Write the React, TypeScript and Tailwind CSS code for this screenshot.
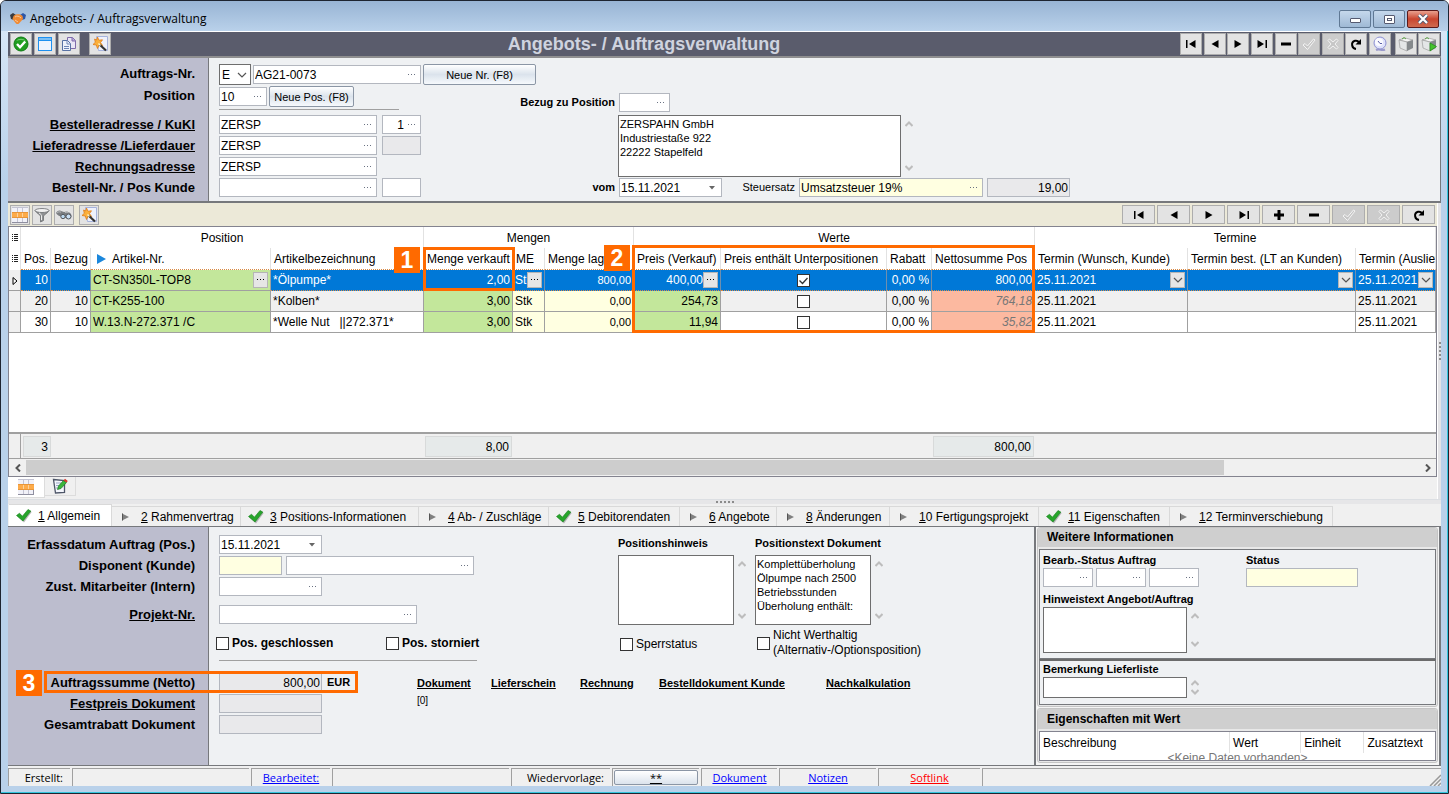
import type { ReactNode } from "react";

/* ---------- icons ---------- */

function Dots({ className = "text-gray-500" }: { className?: string }) {
	return (
		<svg width="8" height="2" viewBox="0 0 8 2" className={`shrink-0 ${className}`} fill="currentColor" shapeRendering="crispEdges">
			<path d="M0 0h1v1H0zM3 0h1v1H3zM6 0h1v1H6z" />
		</svg>
	);
}

function Chevron({ up = false, className = "text-[#bdbdbd]" }: { up?: boolean; className?: string }) {
	return (
		<svg width="8" height="6" viewBox="0 0 8 6" className={`shrink-0 ${className}`} fill="none" stroke="currentColor" strokeWidth="2">
			<path d={up ? "M0.5 5L4 1.5 7.5 5" : "M0.5 1L4 4.500 7.500 1"} />
		</svg>
	);
}

function SelectArrow() {
	return (
		<svg width="10" height="6" viewBox="0 0 10 6" fill="none" stroke="#555" strokeWidth="1.200">
			<path d="M1 1l4 4 4-4" />
		</svg>
	);
}

function HandshakeIcon() {
	return (
		<svg width="16" height="14" viewBox="0 0 16 14">
			<path d="M0 3l3-2 3 2-2 5-3-1z" fill="#3b3b3f" />
			<path d="M16 3l-3-2-3 2 2 5 3-1z" fill="#2c56a8" />
			<path d="M3.500 4c2-2.500 7-2.500 9 0l.5 3-4 4.500c-1 .7-2 .7-3 0L2.500 7z" fill="#f08a33" />
			<path d="M5 5c2-1.500 4-1 6 1M5 8l3 2" stroke="#fbc896" fill="none" />
		</svg>
	);
}

function OkIcon() {
	return (
		<svg width="16" height="16" viewBox="0 0 16 16">
			<circle cx="8" cy="8" r="7" fill="#1f9d1f" stroke="#0f7a14" />
			<path d="M3 5a6 5 0 0 1 10 0c-3-1.500-7-1.500-10 0z" fill="#6cc96a" />
			<path d="M4 8l3 3.200L12.200 5.500" stroke="#fff" strokeWidth="2.400" fill="none" />
		</svg>
	);
}

function WindowIcon() {
	return (
		<svg width="16" height="16" viewBox="0 0 16 16">
			<rect x="1.500" y="1.500" width="13" height="13" fill="#eef4fd" stroke="#1e90ef" />
			<path d="M2 2h12v2H2z" fill="#7cc0f5" />
			<path d="M1 4.500h14" stroke="#1e90ef" />
		</svg>
	);
}

function CopyIcon() {
	return (
		<svg width="16" height="16" viewBox="0 0 16 16">
			<path d="M6.500 1.500h5l3 3v8h-8z" fill="#e9e6f6" stroke="#7f6bab" />
			<path d="M11 1.500v3.500h3.500" fill="#b8a8dc" stroke="#7f6bab" />
			<path d="M1.500 4.500h5l3 3v7h-8z" fill="#eef2fb" stroke="#5872a4" />
			<path d="M6 4.500v3.500h3.500M3 10.500h5M3 12.500h5" fill="none" stroke="#6e86b6" />
		</svg>
	);
}

function WandIcon() {
	return (
		<svg width="16" height="16" viewBox="0 0 16 16">
			<path d="M4.500 .5h11v14h-9z" fill="#eef1fb" stroke="#a6b3dc" />
			<path d="M5.500 1l1.400 3.200 3.600-.4-2 2.800 2.200 3-3.500-.4L5.500 12.500 4.300 9 1 8.500l2.300-2.200L2.600 3l2 1z" fill="#fbb03b" stroke="#e07b17" strokeWidth=".8" />
			<path d="M7.500 8.500l6.500 6" stroke="#333" strokeWidth="2.200" />
			<path d="M6.500 7.500l2 2" stroke="#fff2c4" strokeWidth="1.500" />
		</svg>
	);
}

function GridIcon() {
	return (
		<svg width="16" height="16" viewBox="0 0 16 16" shapeRendering="crispEdges">
			<path d="M0 1h16v14H0z" fill="#f1f1f8" />
			<path d="M0 5h16v6H0z" fill="#fdab4a" />
			<path d="M5.500 5v6M10.500 5v6" stroke="#fbd3a0" />
			<path d="M5.500 1v4M10.500 1v4M5.500 11v4M10.500 11v4" stroke="#c3c3d2" />
			<path d="M0 5.500h16M0 10.500h16" stroke="#e8963a" />
			<path d="M0 15.500h16M15.500 11v5" stroke="#8f8fa0" />
			<path d="M0 .5h16" stroke="#c3c3d2" />
		</svg>
	);
}

function FunnelIcon() {
	return (
		<svg width="16" height="16" viewBox="0 0 16 16">
			<path d="M1 3.500c2 3 5 4 5.500 5.500V15l3-1.500V9c.5-1.500 4-2.500 5.500-5.500z" fill="#8f9194" stroke="#6b6d70" strokeWidth=".8" />
			<ellipse cx="8" cy="3.500" rx="7" ry="2" fill="#f0f0f0" stroke="#6b6d70" strokeWidth=".8" />
			<path d="M5 6c2 1 2.500 2 2.500 3v4" stroke="#eee" fill="none" />
		</svg>
	);
}

function BinocularsIcon() {
	return (
		<svg width="16" height="16" viewBox="0 0 16 16">
			<path d="M0 6c1-2 3-3 5-2l3 1 3-.5c3 .5 4.500 2.500 4.500 4.500s-2 3-4 2.500L7 10C4 9.500 1 8.500 0 6z" fill="#7b7e81" />
			<path d="M1 6c1-1.300 2.500-1.500 4-.8M9 5.500c1.500-.5 3-.2 4 .8" stroke="#b9bcbf" fill="none" />
			<circle cx="7" cy="9.500" r="2.200" fill="#bcd9f0" stroke="#55585c" />
			<circle cx="12.500" cy="9.500" r="2.500" fill="#c9e0f5" stroke="#55585c" />
		</svg>
	);
}

function NoteIcon() {
	return (
		<svg width="16" height="16" viewBox="0 0 16 16">
			<path d="M1.500 1.500l11 1v12l-9 .5z" fill="#f4f6fc" stroke="#4e5668" strokeWidth="1.300" />
			<path d="M4 5h5M4 7.500h4M4 10h3" stroke="#9aa7c7" />
			<path d="M5.500 11.500l1-3.500L11.500 2.500l3 2L9 10.500z" fill="#3bb53b" stroke="#1b7a22" strokeWidth=".7" />
			<path d="M11.500 2.500L13 .8 15.800 3l-1.300 1.500z" fill="#d9352b" />
		</svg>
	);
}

function ClockIcon() {
	return (
		<svg width="16" height="16" viewBox="0 0 16 16">
			<path d="M4 14c3-1.500 6 1 9-.5" stroke="#9a9acb" strokeWidth="2" fill="none" />
			<circle cx="8" cy="7" r="6" fill="#dfe2fb" stroke="#8f92d2" />
			<circle cx="7" cy="6" r="4" fill="#fafaff" />
			<path d="M8 7.500L6 5M8 7.500h2" stroke="#5c60a8" />
		</svg>
	);
}

function BoxIcon({ play = false }: { play?: boolean }) {
	return (
		<svg width="16" height="16" viewBox="0 0 16 16">
			<path d="M1 4l6-2 8 2-6 2z" fill="#f5f5f5" stroke="#9c9c9c" strokeWidth=".7" />
			<path d="M1 4l8 2v9l-7-3z" fill="#e4e6e7" stroke="#9c9c9c" strokeWidth=".7" />
			<path d="M9 6l6-2v8l-6 3z" fill="#85898c" />
			<path d="M4 3l2-1.500 2 1.500" stroke="#5da845" fill="none" />
			{play && <path d="M9 7l6.500 3.500L9 15z" fill="#46c22e" stroke="#228a18" strokeWidth=".7" />}
		</svg>
	);
}

const navPaths = {
	first: <path d="M3 4h1.500v8H3zM12.500 4v8L6 8z" fill="#000" />,
	prev: <path d="M11.500 4v8L4.500 8z" fill="#000" />,
	next: <path d="M4.500 4v8l7-4z" fill="#000" />,
	last: <path d="M3.500 4v8L10 8zM11.500 4H13v8h-1.500z" fill="#000" />,
	plus: <path d="M3 8h10M8 3v10" stroke="#000" strokeWidth="3" />,
	minus: <path d="M3 8h10" stroke="#000" strokeWidth="3" />,
	check: <path d="M2 9l2-1.500 2.500 2.500L12.500 3l1.500 1-7.500 9.500z" fill="#c6c6c6" stroke="#f4f4f4" />,
	cross: <path d="M3 4.500L4.500 3 8 6l3.500-3L13 4.500 10 8l3 3.500-1.500 1.500L8 10l-3.500 3L3 11.500 6 8z" fill="#c6c6c6" stroke="#f4f4f4" />,
	refresh: (
		<>
			<path d="M8 13C3.500 12.500 2.500 6 7 4.800c2-.4 3.300.4 4 1.700" fill="none" stroke="#000" strokeWidth="2" />
			<path d="M13 3v5.500H7.500z" fill="#000" />
		</>
	),
};

type NavName = keyof typeof navPaths;

function NavIcon({ name }: { name: NavName }) {
	return (
		<svg width="16" height="16" viewBox="0 0 16 16">
			{navPaths[name]}
		</svg>
	);
}

function GreenCheck() {
	return (
		<svg width="16" height="14" viewBox="0 0 16 14" className="shrink-0">
			<path d="M1.500 7.500L4 5l3 3 6-7 2.700 2L8 13.500z" fill="#777" opacity=".5" />
			<path d="M.5 6.500L3.500 4.200l2.900 3L12 .5l2.800 1.600L7 12z" fill="#27a52b" stroke="#14801a" strokeWidth=".6" />
		</svg>
	);
}

function GrayArrow() {
	return (
		<svg width="16" height="8" viewBox="0 0 16 8" className="shrink-0">
			<path d="M3 .5v7L10 4z" fill="#808080" />
			<path d="M3 .5h1v7H3z" fill="#555" />
		</svg>
	);
}

/* ---------- form pieces ---------- */

interface FieldProps {
	label: string;
	value?: string;
	id?: string;
	width: string;
	bg?: string;
	dots?: boolean;
	caret?: boolean;
	right?: boolean;
	readOnly?: boolean;
}

function Field({ label, value = "", id, width, bg = "bg-white", dots, caret, right, readOnly }: FieldProps) {
	return (
		<span className={`flex h-[19px] shrink-0 items-center border border-[#b3b7bf] ${bg} ${width}`}>
			<input
				id={id}
				aria-label={label}
				defaultValue={value}
				readOnly={readOnly}
				className={`h-full w-0 min-w-0 flex-1 bg-transparent pl-[1px] text-[12px] outline-none ${right && dots ? "pr-1" : "pr-[1px]"} ${right ? "text-right" : ""}`}
			/>
			{dots && (
				<button type="button" aria-label={`${label} suchen`} className="flex h-full w-3 shrink-0 items-center">
					<Dots />
				</button>
			)}
			{caret && (
				<button type="button" aria-label={`${label} wählen`} className="flex h-full w-3 shrink-0 items-center">
					<svg width="6" height="4" viewBox="0 0 6 4">
						<path d="M0 0h6L3 3.500z" fill="#666" />
					</svg>
				</button>
			)}
		</span>
	);
}

function Memo({ id, label, value = "", width, height }: { id?: string; label?: string; value?: string; width: string; height: string }) {
	return (
		<div className={`flex shrink-0 ${height}`}>
			<textarea
				id={id}
				aria-label={label}
				defaultValue={value}
				className={`h-full resize-none overflow-hidden border border-[#6e6e6e] bg-white px-[1px] py-[1px] text-[11px] leading-[14px] outline-none ${width}`}
			/>
			<div className="flex w-4 flex-col items-center justify-between py-[6px]">
				<Chevron up />
				<Chevron />
			</div>
		</div>
	);
}

function SideLabel({ text, link, htmlFor }: { text: string; link?: boolean; htmlFor?: string }) {
	return (
		<div className="flex h-[21px] items-center justify-end pr-[13px] text-[13px] font-bold whitespace-nowrap">
			{link ? (
				<a href="#" className="underline underline-offset-1">{text}</a>
			) : (
				<label htmlFor={htmlFor}>{text}</label>
			)}
		</div>
	);
}

function PushButton({ children, width }: { children: ReactNode; width: string }) {
	return (
		<button
			type="button"
			className={`h-[21px] shrink-0 rounded-[2px] border border-[#8b96a5] bg-linear-to-b from-white via-[#dbe3ec] to-[#f6f9fc] text-[11px] leading-4 ${width}`}
		>
			{children}
		</button>
	);
}

function IconButton({ label, children, size = "h-[22px] w-[22px]", disabled }: { label: string; children: ReactNode; size?: string; disabled?: boolean }) {
	return (
		<button
			type="button"
			aria-label={label}
			disabled={disabled}
			className={`flex shrink-0 items-center justify-center border border-[#adadad] ${size} ${disabled ? "bg-[#cccccc]" : "bg-[#e3e3e3]"}`}
		>
			{children}
		</button>
	);
}

function Check({ id, label, checked, bold }: { id: string; label: string; checked?: boolean; bold?: boolean }) {
	return (
		<span className="flex items-center gap-[3px] whitespace-pre-line">
			<CheckBox id={id} checked={checked} />
			<label htmlFor={id} className={`text-[12px] leading-[15px] ${bold ? "font-bold" : ""}`}>{label}</label>
		</span>
	);
}

function CheckBox({ id, label, checked }: { id?: string; label?: string; checked?: boolean }) {
	return (
		<span className="relative inline-flex h-[13px] w-[13px] shrink-0">
			<input
				id={id}
				type="checkbox"
				aria-label={label}
				defaultChecked={checked}
				className="peer h-[13px] w-[13px] appearance-none border border-[#333] bg-white"
			/>
			<svg viewBox="0 0 13 13" className="pointer-events-none absolute inset-0 hidden peer-checked:block" fill="none" stroke="#333" strokeWidth="1.300">
				<path d="M2.500 6.500l3 3 5-5.500" />
			</svg>
		</span>
	);
}

function Callout({ n, place }: { n: number; place: string }) {
	return (
		<span className={`absolute flex h-[26px] w-[26px] items-center justify-center bg-[#ff6a00] text-[23px] font-bold text-white ${place}`}>
			{n}
		</span>
	);
}

/* ---------- title bar and header ---------- */

function TitleBar() {
	return (
		<div className="flex h-[30px] items-start justify-between bg-linear-to-b from-[#98b4d4] to-[#b9d1ea] pr-[9px] pl-[9px]">
			<div className="flex items-center gap-1 pt-[10px] font-['Open_Sans'] text-[12px] leading-4">
				<HandshakeIcon />
				<span>Angebots- / Auftragsverwaltung</span>
			</div>
			<div className="flex gap-[2px] pt-[9px]">
				<button type="button" aria-label="Minimieren" className="flex h-[18px] w-8 items-center justify-center rounded-[2px] border border-[#5f7894] bg-linear-to-b from-[#c5d8ec] to-[#9fb9d5]">
					<span className="mt-[3px] h-[5px] w-[11px] rounded-[1px] border border-[#555a70] bg-white" />
				</button>
				<button type="button" aria-label="Maximieren" className="flex h-[18px] w-8 items-center justify-center rounded-[2px] border border-[#5f7894] bg-linear-to-b from-[#c5d8ec] to-[#9fb9d5]">
					<span className="flex h-[9px] w-[11px] items-center justify-center rounded-[1px] border border-[#555a70] bg-white">
						<span className="h-[3px] w-[5px] border border-[#555a70]" />
					</span>
				</button>
				<button type="button" aria-label="Schließen" className="flex h-[18px] w-8 items-center justify-center rounded-[2px] border border-[#5c1a1a] bg-linear-to-b from-[#e8a08f] via-[#c9452f] to-[#cf6a50]">
					<svg width="12" height="10" viewBox="0 0 12 10">
						<path d="M2 1l8 8M10 1L2 9" stroke="#555a70" strokeWidth="4" />
						<path d="M2 1l8 8M10 1L2 9" stroke="#fff" strokeWidth="2.200" />
					</svg>
				</button>
			</div>
		</div>
	);
}

const mainNav: { name: NavName; label: string; disabled?: boolean }[] = [
	{ name: "first", label: "Erster" },
	{ name: "prev", label: "Vorheriger" },
	{ name: "next", label: "Nächster" },
	{ name: "last", label: "Letzter" },
	{ name: "minus", label: "Löschen" },
	{ name: "check", label: "Speichern", disabled: true },
	{ name: "cross", label: "Abbrechen", disabled: true },
	{ name: "refresh", label: "Aktualisieren" },
];

const gridNav = [...mainNav.slice(0, 4), { name: "plus" as NavName, label: "Einfügen" }, ...mainNav.slice(4)];

function MainToolbar() {
	return (
		<div className="grid h-[26px] grid-cols-[1fr_auto_1fr] items-center border-b-2 border-[#8f8f90] bg-[#5a5c6c] pr-[1px] pl-[2px]">
			<div className="flex gap-[2px]">
				<IconButton label="OK"><OkIcon /></IconButton>
				<IconButton label="Neues Fenster"><WindowIcon /></IconButton>
				<IconButton label="Kopieren"><CopyIcon /></IconButton>
				<span className="w-[5px]" />
				<IconButton label="Assistent"><WandIcon /></IconButton>
			</div>
			<h1 className="pr-[162px] text-[18px] leading-6 font-bold whitespace-nowrap text-[#cfd3df]">Angebots- / Auftragsverwaltung</h1>
			<div className="flex justify-end gap-1">
				<div className="flex w-[211px] justify-between">
					{mainNav.map((b) => (
						<IconButton key={b.name} label={b.label} disabled={b.disabled}><NavIcon name={b.name} /></IconButton>
					))}
					<IconButton label="Zeit"><ClockIcon /></IconButton>
				</div>
				<div className="flex w-[45px] justify-between">
					<IconButton label="Modul"><BoxIcon /></IconButton>
					<IconButton label="Modul starten"><BoxIcon play /></IconButton>
				</div>
			</div>
		</div>
	);
}

function HeaderPanel() {
	return (
		<div className="flex border-r border-b-2 border-[#76787c]">
			<div className="w-[201px] shrink-0 border-r border-[#76787c] bg-[#bcbdce] pt-[5px]">
				<SideLabel text="Auftrags-Nr." htmlFor="auftrag" />
				<div className="mt-[1px]"><SideLabel text="Position" htmlFor="position" /></div>
				<div className="mt-2">
					<SideLabel text="Bestelleradresse / KuKl" link />
					<SideLabel text="Lieferadresse /Lieferdauer" link />
					<SideLabel text="Rechnungsadresse" link />
					<SideLabel text="Bestell-Nr. / Pos Kunde" htmlFor="bestellnr" />
				</div>
			</div>
			<div className="min-w-0 flex-1 bg-[#eff1f3] pt-[6px] pb-1 pl-[10px]">
				<div className="flex items-center gap-[2px]">
					<span className="relative flex">
						<select aria-label="Auftragsart" defaultValue="E" className="h-[21px] w-8 appearance-none border border-[#6e6e6e] bg-white pl-[2px] text-[12px]">
							<option>E</option>
						</select>
						<span className="pointer-events-none absolute top-2 right-1"><SelectArrow /></span>
					</span>
					<Field id="auftrag" label="Auftrags-Nr." value="AG21-0073" width="w-[168px]" dots />
					<PushButton width="w-[113px]">Neue Nr. (F8)</PushButton>
				</div>
				<div className="flex">
					<div className="w-[203px] shrink-0 pt-[1px]">
						<div className="flex items-center gap-[2px]">
							<Field id="position" label="Position" value="10" width="w-12" dots />
							<PushButton width="w-[85px]">Neue Pos. (F8)</PushButton>
						</div>
						<hr className="mt-[2px] w-[180px] border-t border-[#a0a0a0]" />
						<div className="mt-[5px] flex flex-col gap-[2px]">
							<div className="flex gap-[5px]">
								<Field label="Bestelleradresse" value="ZERSP" width="w-[158px]" dots />
								<Field label="KuKl" value="1" width="w-[39px]" dots right />
							</div>
							<div className="flex gap-[5px]">
								<Field label="Lieferadresse" value="ZERSP" width="w-[158px]" dots />
								<Field label="Lieferdauer" width="w-[39px]" bg="bg-[#e9e9eb]" readOnly />
							</div>
							<Field label="Rechnungsadresse" value="ZERSP" width="w-[158px]" dots />
							<div className="flex gap-[5px]">
								<Field id="bestellnr" label="Bestell-Nr." width="w-[158px]" dots />
								<Field label="Pos Kunde" width="w-[39px]" />
							</div>
						</div>
					</div>
					<div className="flex flex-col pt-2">
						<div className="flex items-center gap-1">
							<label htmlFor="bezug" className="w-[193px] text-right text-[11px] font-bold">Bezug zu Position</label>
							<Field id="bezug" label="Bezug zu Position" width="w-[51px]" dots />
						</div>
						<div className="mt-[3px] pl-[196px]">
							<Memo label="Adresse" value={"ZERSPAHN GmbH\nIndustriestaße 922\n22222 Stapelfeld"} width="w-[283px]" height="h-[62px]" />
						</div>
						<div className="mt-[1px] flex items-center gap-1">
							<label htmlFor="vom" className="w-[193px] text-right text-[11px] font-bold">vom</label>
							<Field id="vom" label="vom" value="15.11.2021" width="w-[103px]" caret />
							<label htmlFor="steuer" className="w-[69px] text-right text-[11px]">Steuersatz</label>
							<Field id="steuer" label="Steuersatz" value="Umsatzsteuer 19%" width="w-[184px]" bg="bg-[#ffffe1]" dots />
							<Field label="Steuersatz in Prozent" value="19,00" width="w-[83px]" bg="bg-[#e9e9eb]" right readOnly />
						</div>
					</div>
				</div>
			</div>
		</div>
	);
}

/* ---------- positions grid ---------- */

const columns = [
	{ title: "Pos.", width: "w-[30px]" },
	{ title: "Bezug", width: "w-[40px]" },
	{ title: "Artikel-Nr.", width: "w-[180px]" },
	{ title: "Artikelbezeichnung", width: "w-[153px]" },
	{ title: "Menge verkauft", width: "w-[89px]" },
	{ title: "ME", width: "w-[32px]" },
	{ title: "Menge lagernd", width: "w-[89px]" },
	{ title: "Preis (Verkauf)", width: "w-[87px]" },
	{ title: "Preis enthält Unterpositionen", width: "w-[166px]" },
	{ title: "Rabatt", width: "w-[45px]" },
	{ title: "Nettosumme Pos", width: "w-[103px]" },
	{ title: "Termin (Wunsch, Kunde)", width: "w-[153px]" },
	{ title: "Termin best. (LT an Kunden)", width: "w-[168px]" },
	{ title: "Termin (Auslieferung)", width: "" },
];

const groups = [
	{ title: "Position", span: 4 },
	{ title: "Mengen", span: 3 },
	{ title: "Werte", span: 4 },
	{ title: "Termine", span: 3 },
];

interface Row {
	pos: string;
	bezug: string;
	artikel: string;
	name: string;
	menge: string;
	lager: string;
	preis: string;
	unter: boolean;
	netto: string;
	selected?: boolean;
	bg: string;
}

const rows: Row[] = [
	{ pos: "10", bezug: "", artikel: "CT-SN350L-TOP8", name: "*Ölpumpe*", menge: "2,00", lager: "800,00", preis: "400,00", unter: true, netto: "800,00", selected: true, bg: "" },
	{ pos: "20", bezug: "10", artikel: "CT-K255-100", name: "*Kolben*", menge: "3,00", lager: "0,00", preis: "254,73", unter: false, netto: "764,18", bg: "bg-[#f0f0f0]" },
	{ pos: "30", bezug: "10", artikel: "W.13.N-272.371 /C", name: "*Welle Nut   ||272.371*", menge: "3,00", lager: "0,00", preis: "11,94", unter: false, netto: "35,82", bg: "bg-white" },
];

function CellButton({ label, children }: { label: string; children: ReactNode }) {
	return (
		<button type="button" aria-label={label} className="flex h-4 w-[15px] shrink-0 items-center justify-center border border-[#b5b5b5] bg-[#e6e6e6]">
			{children}
		</button>
	);
}

function Cell({ children, className = "", button }: { children?: ReactNode; className?: string; button?: ReactNode }) {
	return (
		<td className={`h-[21px] border-r border-b p-0 ${className}`}>
			<div className="flex h-[20px] items-center overflow-hidden px-[2px] whitespace-pre">
				<span className="min-w-0 flex-1 overflow-hidden">{children}</span>
				{button}
			</div>
		</td>
	);
}

function PositionRow({ row }: { row: Row }) {
	const sel = row.selected;
	const base = sel ? "border-r-[#6f8fae] border-b-[#d98a45] [border-bottom-style:dotted] bg-[#0078d7] text-white" : `border-[#a0a0a0] ${row.bg}`;
	const green = sel ? base : "border-[#a0a0a0] bg-[#c3e79b]";
	const yellow = sel ? base : "border-[#a0a0a0] bg-[#ffffe1]";
	const dots = <CellButton label="Auswahl"><Dots className="text-black" /></CellButton>;
	const drop = <CellButton label="Datum wählen"><SelectArrow /></CellButton>;

	return (
		<tr>
			<Cell className="border-[#a0a0a0] bg-[#f0f0f0]">
				{sel && (
					<svg width="7" height="8" viewBox="0 0 7 8" className="mt-[1px] ml-[1px]">
						<path d="M1 0.500v7L5 4z" fill="#fff" stroke="#000" />
					</svg>
				)}
			</Cell>
			<Cell className={`text-right ${base}`}>{row.pos}</Cell>
			<Cell className={`text-right ${base}`}>{row.bezug}</Cell>
			<Cell className="border-[#a0a0a0] bg-[#c3e79b]" button={sel && dots}>{row.artikel}</Cell>
			<Cell className={base}>{row.name}</Cell>
			<Cell className={`text-right ${green}`}>{row.menge}</Cell>
			<Cell className={yellow} button={sel && dots}>Stk</Cell>
			<Cell className={`text-right text-[11px] ${yellow}`}>{row.lager}</Cell>
			<Cell className={`text-right ${green}`} button={sel && dots}>{row.preis}</Cell>
			<td className={`h-[21px] border-r border-b p-0 ${base}`}>
				<div className="flex h-[20px] items-center justify-center">
					<CheckBox label={`Preis enthält Unterpositionen, Position ${row.pos}`} checked={row.unter} />
				</div>
			</td>
			<Cell className={`text-right ${base}`}>0,00 %</Cell>
			<Cell className={`text-right ${sel ? base : "border-[#a0a0a0] bg-[#fcb9a0] text-[#777] italic"}`}>{row.netto}</Cell>
			<Cell className={base} button={sel && drop}>25.11.2021</Cell>
			<Cell className={base} button={sel && drop} />
			<Cell className={base} button={sel && drop}>25.11.2021</Cell>
		</tr>
	);
}

function ListMark() {
	return (
		<svg width="8" height="8" viewBox="0 0 8 8" className="mx-auto" shapeRendering="crispEdges">
			<path d="M1 0h1v1H1zM1 2h1v1H1zM1 4h1v1H1zM1 6h1v1H1zM3 0h4v1H3zM3 2h4v1H3zM3 4h4v1H3zM3 6h4v1H3z" fill="#222" />
		</svg>
	);
}

function PositionsGrid() {
	return (
		<div className="flex flex-1 flex-col border-x border-b border-[#83838f] bg-white">
			<div className="relative flex-1 overflow-hidden border-b-2 border-[#a0a0a0] pb-4">
				<table className="w-full table-fixed border-separate border-spacing-0 text-[12px] leading-4">
					<colgroup>
						<col className="w-[12px]" />
						{columns.map((c) => <col key={c.title} className={c.width} />)}
					</colgroup>
					<thead>
						<tr>
							<th className="h-[21px] border-r border-[#e2e2e2] p-0"><ListMark /></th>
							{groups.map((g) => (
								<th key={g.title} colSpan={g.span} className="border-r border-[#e2e2e2] p-0 font-normal">{g.title}</th>
							))}
						</tr>
						<tr>
							<th className="h-[22px] border-r border-[#e2e2e2] p-0"><ListMark /></th>
							{columns.map((c) => (
								<th key={c.title} className={`overflow-hidden border-r border-b border-r-[#e2e2e2] border-b-[#d98a45] p-0 text-left font-normal whitespace-nowrap [border-bottom-style:dotted] ${c.title === "Artikel-Nr." ? "pl-[6px]" : "pl-[3px]"}`}>
									{c.title === "Artikel-Nr." ? (
										<span className="flex items-center gap-[6px]">
											<svg width="9" height="10" viewBox="0 0 9 10"><path d="M0 0v10l9-5z" fill="#1b87dc" /></svg>
											{c.title}
										</span>
									) : c.title}
								</th>
							))}
						</tr>
					</thead>
					<tbody>
						{rows.map((r) => <PositionRow key={r.pos} row={r} />)}
					</tbody>
				</table>
				<span className="absolute top-[20px] left-[414px] h-[44px] w-[92px] border-3 border-[#ff6a00]" />
				<Callout n={1} place="top-[20px] left-[385px]" />
				<span className="absolute top-[18px] left-[623px] h-[88px] w-[403px] border-3 border-[#ff6a00]" />
				<Callout n={2} place="top-[18px] left-[595px]" />
			</div>
			<div className="flex h-[25px] items-center border-b border-[#a0a0a0] bg-[#f0f0f0] text-[12px]">
				<span className="h-full w-[12px] border-r border-[#a0a0a0]" />
				<output className="ml-[2px] h-[21px] w-[28px] border border-[#d8dada] bg-[#e6eaea] pr-[2px] text-right leading-5">3</output>
				<output className="ml-[374px] h-[21px] w-[87px] border border-[#d8dada] bg-[#e6eaea] pr-[2px] text-right leading-5">8,00</output>
				<output className="ml-[421px] h-[21px] w-[101px] border border-[#d8dada] bg-[#e6eaea] pr-[2px] text-right leading-5">800,00</output>
			</div>
			<div className="flex h-[17px] items-center bg-[#f0f0f0]">
				<button type="button" aria-label="Nach links" className="flex h-full w-[17px] items-center justify-center">
					<svg width="6" height="8" viewBox="0 0 6 8" fill="none" stroke="#555" strokeWidth="2"><path d="M5 .5L1.500 4 5 7.500" /></svg>
				</button>
				<div className="h-full flex-1 py-[1px]"><div className="h-full w-[86%] bg-[#cdcdcd]" /></div>
				<button type="button" aria-label="Nach rechts" className="flex h-full w-[17px] items-center justify-center">
					<svg width="6" height="8" viewBox="0 0 6 8" fill="none" stroke="#555" strokeWidth="2"><path d="M1 .5L4.500 4 1 7.500" /></svg>
				</button>
			</div>
		</div>
	);
}

function GridSection() {
	return (
		<div className="flex flex-1 bg-[#f0f0f0]">
			<div className="flex min-w-0 flex-1 flex-col">
				<div className="flex h-6 items-center justify-between border-b border-[#83838f] bg-[#ece9d8] px-[2px]">
					<div className="flex gap-[2px]">
						<IconButton label="Tabelle" size="h-[20px] w-[20px]"><GridIcon /></IconButton>
						<IconButton label="Filter" size="h-[20px] w-[20px]"><FunnelIcon /></IconButton>
						<IconButton label="Suchen" size="h-[20px] w-[20px]"><BinocularsIcon /></IconButton>
						<span className="w-[1px]" />
						<IconButton label="Assistent" size="h-[20px] w-[20px]"><WandIcon /></IconButton>
					</div>
					<div className="flex gap-[2px]">
						{gridNav.map((b) => (
							<IconButton key={b.name} label={b.label} disabled={b.disabled} size="h-[19px] w-[33px]"><NavIcon name={b.name} /></IconButton>
						))}
					</div>
				</div>
				<PositionsGrid />
				<div className="flex h-[22px] items-start">
					<button type="button" aria-label="Tabellenansicht" className="flex h-[21px] w-[37px] items-center justify-center border-r border-b border-[#dcdcdc] bg-white"><GridIcon /></button>
					<button type="button" aria-label="Notiz" className="flex h-[19px] w-[31px] items-center justify-center border-r border-b border-[#dcdcdc]"><NoteIcon /></button>
				</div>
			</div>
			<div className="flex w-1 flex-col items-center justify-center gap-[2px] border-l border-white bg-[#e3e3e6]">
				{[0, 1, 2, 3, 4].map((i) => <span key={i} className="h-[2px] w-[2px] bg-[#8b8b8b]" />)}
			</div>
		</div>
	);
}

/* ---------- detail tabs ---------- */

const tabs = [
	{ key: "1", rest: " Allgemein", done: true, width: "w-[103px]" },
	{ key: "2", rest: " Rahmenvertrag", done: false, width: "w-[129px]" },
	{ key: "3", rest: " Positions-Informationen", done: true, width: "w-[178px]" },
	{ key: "4", rest: " Ab- / Zuschläge", done: false, width: "w-[130px]" },
	{ key: "5", rest: " Debitorendaten", done: true, width: "w-[131px]" },
	{ key: "6", rest: " Angebote", done: false, width: "w-[97px]" },
	{ key: "8", rest: " Änderungen", done: false, width: "w-[113px]" },
	{ key: "1", rest: "0 Fertigungsprojekt", done: false, width: "w-[149px]" },
	{ key: "1", rest: "1 Eigenschaften", done: true, width: "w-[131px]" },
	{ key: "1", rest: "2 Terminverschiebung", done: false, width: "w-[163px]" },
];

function DetailTabs() {
	return (
		<div className="border-b border-[#76787c] bg-[#f0f0f0]">
			<div className="flex h-[5px] items-center justify-center gap-[2px] border-t border-[#dcdfe3] bg-[#e6e6e8]">
				{[0, 1, 2, 3, 4].map((i) => <span key={i} className="h-[2px] w-[2px] bg-[#8b8b8b]" />)}
			</div>
			<div className="flex items-end pl-[1px]" role="tablist">
				{tabs.map((t, i) => (
					<button
						key={t.key + t.rest}
						type="button"
						role="tab"
						aria-selected={i === 0}
						className={`flex shrink-0 items-center gap-[6px] border-t border-r border-[#d9d9d9] pl-[7px] text-[12px] whitespace-pre ${i === 0 ? "h-[22px] bg-white" : "h-5 bg-[#f0f0f0]"} ${t.width}`}
					>
						{t.done ? <GreenCheck /> : <GrayArrow />}
						<span><u className="underline-offset-1">{t.key}</u>{t.rest}</span>
					</button>
				))}
			</div>
		</div>
	);
}

function InfoPanel() {
	return (
		<div className="flex w-[407px] shrink-0 flex-col border-x-2 border-[#76787c] bg-[#f4f4f4] px-[1px] pb-[2px]">
			<section className="rounded-[3px] border border-[#c4c4c4] bg-[#e8e8e8] p-[1px]">
				<h2 className="-m-[1px] rounded-t-[3px] bg-[#cfcfcf] px-[9px] text-[12px] leading-[19px] font-bold">Weitere Informationen</h2>
				<div className="mt-[3px] border border-[#76787c] bg-[#eff1f3] px-[3px] pt-[2px] pb-[5px] text-[11px] font-bold">
					<div className="flex">
						<div className="w-[203px]">
							<label htmlFor="bearb" className="block leading-4">Bearb.-Status Auftrag</label>
							<div className="flex gap-[3px] font-normal">
								<Field id="bearb" label="Bearbeitungsstatus 1" width="w-[50px]" dots />
								<Field label="Bearbeitungsstatus 2" width="w-[50px]" dots />
								<Field label="Bearbeitungsstatus 3" width="w-[50px]" dots />
							</div>
						</div>
						<div>
							<label htmlFor="status" className="block leading-4">Status</label>
							<Field id="status" label="Status" width="w-[112px]" bg="bg-[#ffffe1]" />
						</div>
					</div>
					<label htmlFor="hinweis" className="mt-1 block leading-4">Hinweistext Angebot/Auftrag</label>
					<Memo id="hinweis" width="w-[144px]" height="h-[46px]" />
				</div>
				<div className="border border-t-2 border-[#76787c] border-t-[#6b6b6b] bg-[#eff1f3] px-[3px] pt-[1px] pb-[6px] text-[11px] font-bold">
					<label htmlFor="liefer" className="block leading-[15px]">Bemerkung Lieferliste</label>
					<div className="flex h-[21px]">
						<input id="liefer" className="h-full w-[144px] border border-[#6e6e6e] bg-white px-[1px] font-normal" />
						<div className="flex w-4 flex-col items-center justify-between py-[3px]">
							<Chevron up />
							<Chevron />
						</div>
					</div>
				</div>
			</section>
			<section className="mt-[1px] rounded-[3px] border border-[#c4c4c4] bg-[#e8e8e8] p-[1px]">
				<h2 className="-m-[1px] rounded-t-[3px] bg-[#cfcfcf] px-[9px] text-[12px] leading-5 font-bold">Eigenschaften mit Wert</h2>
				<div className="mt-[3px] h-[30px] overflow-hidden border border-[#83838f] bg-white">
					<table className="w-full table-fixed text-[12px]">
						<thead>
							<tr>
								<th className="h-[21px] w-[48%] border-r border-[#e2e2e2] p-0 pl-[3px] text-left font-normal">Beschreibung</th>
								<th className="w-[18%] border-r border-[#e2e2e2] p-0 pl-[3px] text-left font-normal">Wert</th>
								<th className="w-[16%] border-r border-[#e2e2e2] p-0 pl-[3px] text-left font-normal">Einheit</th>
								<th className="p-0 pl-[3px] text-left font-normal">Zusatztext</th>
							</tr>
						</thead>
						<tbody>
							<tr>
								<td colSpan={4} className="p-0 text-center leading-[10px] text-[#777]">&lt;Keine Daten vorhanden&gt;</td>
							</tr>
						</tbody>
					</table>
				</div>
			</section>
		</div>
	);
}

const docLinks = [
	{ text: "Dokument", width: "w-[74px]" },
	{ text: "Lieferschein", width: "w-[89px]" },
	{ text: "Rechnung", width: "w-[79px]" },
	{ text: "Bestelldokument Kunde", width: "w-[167px]" },
	{ text: "Nachkalkulation", width: "w-[100px]" },
];

function DetailPanel() {
	return (
		<div className="relative flex border-b border-[#76787c]">
			<div className="w-[201px] shrink-0 border-r border-[#76787c] bg-[#bcbdce] pt-[7px]">
				<SideLabel text="Erfassdatum Auftrag (Pos.)" htmlFor="erfass" />
				<SideLabel text="Disponent (Kunde)" htmlFor="disponent" />
				<SideLabel text="Zust. Mitarbeiter (Intern)" htmlFor="zust" />
				<div className="mt-[7px]"><SideLabel text="Projekt-Nr." link /></div>
				<div className="mt-[47px]">
					<SideLabel text="Auftragssumme (Netto)" htmlFor="summe" />
					<SideLabel text="Festpreis Dokument" link />
					<SideLabel text="Gesamtrabatt Dokument" htmlFor="rabatt" />
				</div>
			</div>
			<div className="min-w-0 flex-1 bg-[#eff1f3] pt-2 pl-[10px]">
				<div className="flex">
					<div className="w-[399px] shrink-0">
						<div className="flex flex-col gap-[2px]">
							<Field id="erfass" label="Erfassdatum" value="15.11.2021" width="w-[103px]" caret />
							<div className="flex gap-1">
								<Field id="disponent" label="Disponent" width="w-[63px]" bg="bg-[#ffffe1]" />
								<Field label="Disponent Name" width="w-[188px]" dots />
							</div>
							<Field id="zust" label="Zust. Mitarbeiter" width="w-[103px]" dots />
						</div>
						<div className="mt-[9px]"><Field label="Projekt-Nr." width="w-[198px]" dots /></div>
						<div className="mt-3 -ml-[3px] flex">
							<div className="w-[170px]"><Check id="geschlossen" label="Pos. geschlossen" bold /></div>
							<Check id="storniert" label="Pos. storniert" bold />
						</div>
						<hr className="mt-[9px] w-[258px] border-t border-[#a0a0a0]" />
					</div>
					<div className="w-[137px] shrink-0">
						<label htmlFor="poshinweis" className="block h-5 text-[11px] leading-4 font-bold">Positionshinweis</label>
						<Memo id="poshinweis" width="w-[116px]" height="h-[70px]" />
						<div className="mt-3 ml-[2px]"><Check id="sperr" label="Sperrstatus" /></div>
					</div>
					<div className="shrink-0">
						<label htmlFor="postext" className="block h-5 text-[11px] leading-4 font-bold">Positionstext Dokument</label>
						<Memo id="postext" value={"Komplettüberholung\nÖlpumpe nach 2500\nBetriebsstunden\nÜberholung enthält:"} width="w-[116px]" height="h-[70px]" />
						<div className="mt-[3px] ml-[2px]"><Check id="werthaltig" label={"Nicht Werthaltig\n(Alternativ-/Optionsposition)"} /></div>
					</div>
				</div>
				<div className="mt-3 flex">
					<div className="flex w-[198px] shrink-0 flex-col gap-[2px]">
						<div className="flex items-center gap-[5px]">
							<Field id="summe" label="Auftragssumme" value="800,00" width="w-[103px]" bg="bg-[#e9e9eb]" right readOnly />
							<span className="text-[11px] font-bold">EUR</span>
						</div>
						<Field label="Festpreis Dokument" width="w-[103px]" bg="bg-[#e9e9eb]" readOnly />
						<Field id="rabatt" label="Gesamtrabatt Dokument" width="w-[103px]" bg="bg-[#e9e9eb]" readOnly />
					</div>
					<div className="pt-[2px] text-[11px] leading-4">
						<div className="flex font-bold whitespace-nowrap">
							{docLinks.map((l) => (
								<span key={l.text} className={l.width}><a href="#" className="underline underline-offset-1">{l.text}</a></span>
							))}
						</div>
						<div className="pt-[2px] text-[10px]">[0]</div>
					</div>
				</div>
				<div className="h-6" />
			</div>
			<InfoPanel />
			<span className="absolute top-[144px] left-[36px] h-[22px] w-[314px] border-3 border-[#ff6a00]" />
			<Callout n={3} place="top-[143px] left-[8px]" />
		</div>
	);
}

function StatusCell({ children, width }: { children?: ReactNode; width: string }) {
	return (
		<span className={`flex items-center border-t border-l border-[#a0a0a0] ${width}`}>{children}</span>
	);
}

function StatusBar() {
	return (
		<div className="flex h-[20px] gap-[2px] bg-[#f0f0f0] pt-[2px] font-['Open_Sans'] text-[11px] leading-4">
			<StatusCell width="w-[62px] justify-end pr-[7px]">Erstellt:</StatusCell>
			<StatusCell width="w-[177px]" />
			<StatusCell width="w-[79px] justify-center"><a href="#" className="text-[#0000ff] underline">Bearbeitet:</a></StatusCell>
			<StatusCell width="w-[177px]" />
			<StatusCell width="w-[99px] justify-end pr-[6px]">Wiedervorlage:</StatusCell>
			<StatusCell width="w-[87px] px-[1px]">
				<button type="button" className="h-[15px] w-full rounded-[2px] border border-[#8b96a5] bg-linear-to-b from-white to-[#dbe3ec] leading-3 underline">**</button>
			</StatusCell>
			<StatusCell width="w-[76px] justify-center"><a href="#" className="text-[#0000ff] underline">Dokument</a></StatusCell>
			<StatusCell width="w-[97px] justify-center"><a href="#" className="text-[#0000ff] underline">Notizen</a></StatusCell>
			<StatusCell width="w-[102px] justify-center"><a href="#" className="text-[#ff0000] underline">Softlink</a></StatusCell>
			<StatusCell width="flex-1 justify-end items-end">
				<svg width="12" height="12" viewBox="0 0 12 12" stroke="#999" strokeWidth="1.500"><path d="M1 12L12 1M5 12l7-7M9 12l3-3" /></svg>
			</StatusCell>
		</div>
	);
}

export default function App() {
	return (
		<div className="flex min-h-screen flex-col overflow-hidden rounded-t-[6px] border border-[#1d2430] bg-[#b9d1ea] font-['Liberation_Sans',Arial,sans-serif] text-black">
			<TitleBar />
			<div className="flex flex-1 flex-col border-r border-b border-[#35c5dd] bg-linear-to-b from-[#d6e6f6] to-[#b9d1ea] to-20% pr-[6px] pb-[6px] pl-[7px]">
				<div className="flex flex-1 flex-col border-t border-white">
					<MainToolbar />
					<HeaderPanel />
					<GridSection />
					<DetailTabs />
					<DetailPanel />
					<StatusBar />
				</div>
			</div>
		</div>
	);
}
